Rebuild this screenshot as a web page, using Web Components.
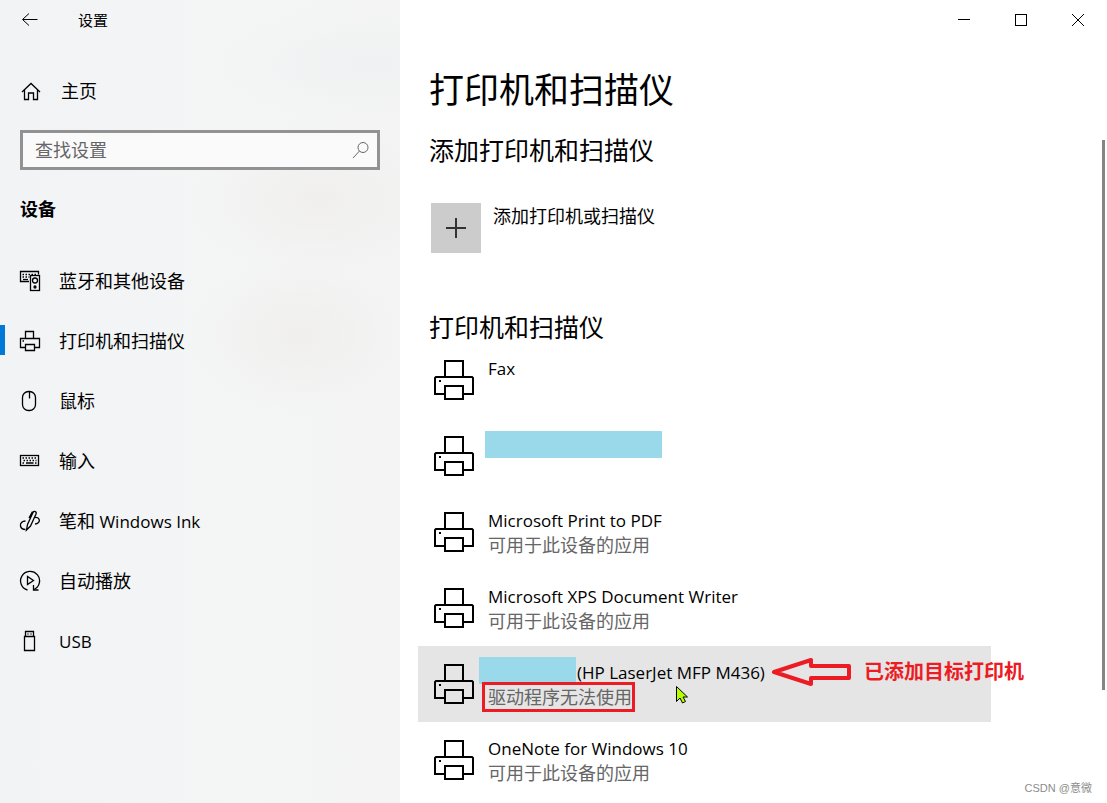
<!DOCTYPE html>
<html lang="zh-CN">
<head>
<meta charset="UTF-8">
<meta name="viewport" content="width=device-width, initial-scale=1">
<title>设置</title>
<style>
    html, body {
        margin: 0;
        height: 100%;
    }
    body {
        font-family: "Open Sans", "Noto Sans CJK SC", sans-serif;
        font-size: 17px;
        line-height: 24px;
        color: #000;
        background: #fff;
        overflow: hidden;
    }
    nav-item [lang="en"] {
        font-size: 17px;
    }
</style>
</head>
<body>
<settings-window>
    <settings-sidebar slot="sidebar">
        <nav-item icon="devices">蓝牙和其他设备</nav-item>
        <nav-item icon="printer" active>打印机和扫描仪</nav-item>
        <nav-item icon="mouse">鼠标</nav-item>
        <nav-item icon="keyboard">输入</nav-item>
        <nav-item icon="pen">笔和<span lang="en"> Windows Ink</span></nav-item>
        <nav-item icon="autoplay">自动播放</nav-item>
        <nav-item icon="usb"><span lang="en">USB</span></nav-item>
    </settings-sidebar>
    <window-controls slot="controls"></window-controls>
    <printer-page>
        <printer-item>Fax</printer-item>
        <printer-item><masked-text wide></masked-text></printer-item>
        <printer-item status="可用于此设备的应用">Microsoft Print to PDF</printer-item>
        <printer-item status="可用于此设备的应用">Microsoft XPS Document Writer</printer-item>
        <printer-item status="驱动程序无法使用" selected>
            <masked-text></masked-text>(HP LaserJet MFP M436)
            <callout-note slot="note">已添加目标打印机</callout-note>
        </printer-item>
        <printer-item status="可用于此设备的应用">OneNote for Windows 10</printer-item>
    </printer-page>
    <span slot="watermark">CSDN @意微</span>
</settings-window>

<script>
const ICONS = {
    back: '<path d="M22.500 11.500H8M14 5.500l-6.500 6 6.500 6" stroke-width="1"/>',
    home: '<path d="M4 13l9-8.500 9 8.500M6.500 11v9.500h4v-6.500h5v6.500h4V11"/>',
    search: '<circle cx="15" cy="9.500" r="5" stroke-width="1"/><path d="M11.500 13L5 20" stroke-width="1"/>',
    devices: '<path d="M12 13.500H3.500v-10h18v3"/><path d="M5.500 6.500h14M5.500 9h7" stroke-dasharray="1.500 1.500"/><path d="M6 11.500h5"/><rect x="13.500" y="7.500" width="9" height="15"/><circle cx="18" cy="12.500" r="2.500"/><circle cx="18" cy="19" r="1" fill="currentColor"/>',
    printer: '<path d="M8.500 10.500v-7h8v7M8.500 19.500h-5v-9h19v9h-5M8.500 16.500h9v6h-9z"/><path d="M5.500 13h1.500"/>',
    mouse: '<rect x="5.500" y="3.500" width="13" height="19" rx="6"/><path d="M12.500 3.500v7"/>',
    keyboard: '<rect x="3.500" y="7.500" width="18" height="10"/><path d="M5.500 10h14M6.500 12.500h13" stroke-dasharray="1.500 1.500"/><path d="M5.500 15h1.500M9 15h7.500M18 15h1.500"/>',
    pen: '<path d="M8.500 13C5 13 3 15.500 3.500 18s2.500 3.500 5 3.500M18 9.500c4-.5 5.500 3 3.500 5-1 1-2.500 1.500-3.500 1.500"/><path d="M9.500 22l1-5.500L16 4.500c1-2 4-1 3 1.500L13.500 18zM12 10l3.500-6.500"/>',
    autoplay: '<path d="M10.500 22A9.500 9.500 0 1 1 17 21.500"/><path d="M10.500 8.500v8l6-4zM16.500 17v5h5"/>',
    usb: '<path d="M8.500 8V3.500h8V8M7.500 8.500h10v14h-10z"/><path d="M10.500 6h1M13.500 6h1"/>',
    minimize: '<path d="M6 11.500h12"/>',
    maximize: '<rect x="6.500" y="6.500" width="11" height="11"/>',
    close: '<path d="M6 6l12 12M18 6L6 18"/>'
};

const icon = (name, size = 25) => `
    <svg width="${size}" height="${size}" viewBox="0 0 ${size} ${size}" fill="none" stroke="currentColor" stroke-width="1.3" aria-hidden="true">${ICONS[name]}</svg>
`;

class SettingsWindow extends HTMLElement {
    constructor() {
        super();
        this.attachShadow({ mode: 'open' });
    }

    connectedCallback() {
        this.shadowRoot.innerHTML = `
            <style>
                :host {
                    display: grid;
                    grid-template-columns: 400px minmax(0, 1fr);
                    height: 100vh;
                    position: relative;
                }
                main {
                    display: flex;
                    flex-direction: column;
                    min-height: 0;
                }
                .watermark {
                    position: absolute;
                    right: 15px;
                    bottom: 6px;
                    font-family: "Liberation Sans", "Noto Sans CJK SC", sans-serif;
                    font-size: 11px;
                    line-height: 18px;
                    color: #8c8c8c;
                }
            </style>
            <slot name="sidebar"></slot>
            <main>
                <slot name="controls"></slot>
                <slot></slot>
            </main>
            <div class="watermark"><slot name="watermark"></slot></div>
        `;
    }
}

class SettingsSidebar extends HTMLElement {
    constructor() {
        super();
        this.attachShadow({ mode: 'open' });
    }

    connectedCallback() {
        this.shadowRoot.innerHTML = `
            <style>
                :host {
                    display: block;
                    background:
                        radial-gradient(ellipse 110px 80px at 300px 335px, #f0efee, transparent),
                        radial-gradient(ellipse 130px 80px at 320px 200px, #f0efee, transparent),
                        radial-gradient(ellipse 160px 60px at 370px 65px, #f0f1f2, transparent),
                        linear-gradient(90deg, #f2f3f5, #f4f5f5 60%, #f4f4f4);
                }
                svg {
                    display: block;
                    flex: none;
                }
                button {
                    display: block;
                    border: 0;
                    padding: 0;
                    background: none;
                    color: inherit;
                }
                .title {
                    display: flex;
                    align-items: center;
                    gap: 45px;
                    height: 40px;
                    padding-left: 15px;
                    font-size: 15px;
                }
                .title button {
                    width: 18px;
                }
                .home {
                    display: flex;
                    align-items: center;
                    gap: 18px;
                    height: 60px;
                    margin: 21px 0 9px;
                    padding-left: 18px;
                    font-size: 18px;
                    color: inherit;
                    text-decoration: none;
                }
                .search {
                    display: flex;
                    align-items: center;
                    box-sizing: border-box;
                    height: 40px;
                    margin: 0 20px;
                    padding: 0 4px 0 12px;
                    border: 3px solid #929292;
                    background: #fafafa;
                    color: #666;
                }
                input {
                    flex: 1;
                    min-width: 0;
                    border: 0;
                    padding: 0;
                    outline: 0;
                    background: none;
                    font: inherit;
                    font-size: 18px;
                    color: #000;
                }
                input::placeholder {
                    color: #666;
                    opacity: 1;
                }
                h2 {
                    margin: 27px 20px 30px;
                    font-size: 18px;
                    line-height: 24px;
                    font-weight: 700;
                }
            </style>
            <div class="title">
                <button type="button" aria-label="返回">${icon('back')}</button>
                <span>设置</span>
            </div>
            <a class="home" href="#home">${icon('home')}主页</a>
            <div class="search">
                <input type="text" placeholder="查找设置" aria-label="查找设置">
                <button type="button" aria-label="搜索">${icon('search')}</button>
            </div>
            <h2>设备</h2>
            <nav><slot></slot></nav>
        `;
    }
}

class NavItem extends HTMLElement {
    constructor() {
        super();
        this.attachShadow({ mode: 'open' });
    }

    connectedCallback() {
        this.shadowRoot.innerHTML = `
            <style>
                :host {
                    display: block;
                }
                a {
                    display: flex;
                    align-items: center;
                    height: 60px;
                    color: inherit;
                    font-size: 18px;
                    text-decoration: none;
                }
                a::before {
                    content: "";
                    width: 5px;
                    height: 30px;
                    margin: 0 12px 2px 0;
                }
                :host([active]) a::before {
                    background: #0078d7;
                }
                svg {
                    margin: 0 17px 2px 0;
                }
            </style>
            <a href="#${this.getAttribute('icon')}">${icon(this.getAttribute('icon'))}<span><slot></slot></span></a>
        `;
    }
}

class WindowControls extends HTMLElement {
    constructor() {
        super();
        this.attachShadow({ mode: 'open' });
    }

    connectedCallback() {
        this.shadowRoot.innerHTML = `
            <style>
                :host {
                    display: flex;
                    justify-content: flex-end;
                    padding-right: 1px;
                }
                button {
                    display: grid;
                    place-items: center;
                    width: 57px;
                    height: 40px;
                    border: 0;
                    padding: 0;
                    background: none;
                    color: #000;
                }
                svg {
                    stroke-width: 1;
                }
            </style>
            <button type="button" aria-label="最小化">${icon('minimize', 24)}</button>
            <button type="button" aria-label="最大化">${icon('maximize', 24)}</button>
            <button type="button" aria-label="关闭">${icon('close', 24)}</button>
        `;
    }
}

class PrinterPage extends HTMLElement {
    constructor() {
        super();
        this.attachShadow({ mode: 'open' });
    }

    connectedCallback() {
        this.shadowRoot.innerHTML = `
            <style>
                :host {
                    display: flex;
                    flex: 1;
                    flex-direction: column;
                    min-height: 0;
                }
                h1, h2 {
                    margin: 0;
                    font-weight: 400;
                }
                h1 {
                    padding: 25px 29px;
                    font-size: 35px;
                    line-height: 50px;
                }
                .body {
                    display: flex;
                    flex: 1;
                    min-height: 0;
                }
                .scroll {
                    flex: 1;
                    min-width: 0;
                }
                h2 {
                    padding: 0 29px;
                    font-size: 25px;
                    line-height: 36px;
                }
                .scroll h2:first-child {
                    margin-top: -8px;
                }
                .add {
                    display: flex;
                    gap: 12px;
                    margin: 35px 31px 56px;
                    border: 0;
                    padding: 0;
                    background: none;
                    color: inherit;
                    font: inherit;
                    font-size: 18px;
                    line-height: 26px;
                }
                .plus {
                    display: grid;
                    place-items: center;
                    width: 50px;
                    height: 50px;
                    background: #ccc;
                }
                .list {
                    max-width: 573px;
                    margin: -3px 18px 0;
                }
                .bar {
                    width: 3px;
                    height: 83%;
                    margin-right: 2px;
                    background: #858585;
                }
            </style>
            <h1>打印机和扫描仪</h1>
            <div class="body">
                <div class="scroll">
                    <h2>添加打印机和扫描仪</h2>
                    <button class="add" type="button">
                        <span class="plus"><svg width="20" height="20" stroke="#333" stroke-width="2"><path d="M0 10h20M10 0v20"/></svg></span>
                        添加打印机或扫描仪
                    </button>
                    <h2>打印机和扫描仪</h2>
                    <div class="list"><slot></slot></div>
                </div>
                <div class="bar"></div>
            </div>
        `;
    }
}

class PrinterItem extends HTMLElement {
    constructor() {
        super();
        this.attachShadow({ mode: 'open' });
    }

    connectedCallback() {
        const status = this.getAttribute('status') || '';

        this.shadowRoot.innerHTML = `
            <style>
                :host {
                    display: flex;
                    gap: 14px;
                    position: relative;
                    box-sizing: border-box;
                    height: 76px;
                    padding: 15px 16px;
                }
                :host([selected]) {
                    background: #e5e5e5;
                }
                svg {
                    display: block;
                    flex: none;
                    margin-top: 3px;
                }
                .name {
                    white-space: nowrap;
                }
                .status {
                    font-size: 18px;
                    color: #666;
                }
                /* driver problem is framed in red */
                :host([selected]) .status span {
                    display: inline-block;
                    margin-left: -3px;
                    padding-left: 3px;
                    outline: 3px solid #ed1c24;
                }
                .pointer {
                    position: absolute;
                    left: 257px;
                    top: 39px;
                    margin: 0;
                }
                :host(:not([selected])) .pointer {
                    display: none;
                }
            </style>
            <svg width="40" height="40" fill="none" stroke="#000" stroke-width="2" aria-hidden="true">
                <path d="M11 16V1h18v15M11 34H1V18l1-1h36l1 1v16H29M11 26h18v13H11z"/>
                <path d="M5 21h2"/>
            </svg>
            <div>
                <div class="name"><slot></slot></div>
                <div class="status"><span>${status}</span></div>
            </div>
            <slot name="note"></slot>
            <svg class="pointer" width="14" height="20" fill="#b6ff00" stroke="#000" aria-hidden="true">
                <path d="M1.500 1.500v15l3.500-3.500 2.500 5 3-1.500-2.500-4.500h4.500z"/>
            </svg>
        `;
    }
}

class MaskedText extends HTMLElement {
    constructor() {
        super();
        this.attachShadow({ mode: 'open' });
    }

    connectedCallback() {
        this.shadowRoot.innerHTML = `
            <style>
                :host {
                    display: inline-block;
                    box-sizing: border-box;
                    width: 97px;
                    height: 27px;
                    margin: -4px 1px -3px -9px;
                    vertical-align: top;
                    background: #99d9ea;
                }
                :host([wide]) {
                    width: 177px;
                    margin: -2px 0 -3px -3px;
                }
            </style>
        `;
    }
}

class CalloutNote extends HTMLElement {
    constructor() {
        super();
        this.attachShadow({ mode: 'open' });
    }

    connectedCallback() {
        this.shadowRoot.innerHTML = `
            <style>
                :host {
                    display: flex;
                    align-items: center;
                    gap: 13px;
                    position: absolute;
                    left: 354px;
                    top: 11px;
                    font-size: 20px;
                    line-height: 30px;
                    font-weight: 700;
                    color: #ed1c24;
                    white-space: nowrap;
                }
            </style>
            <svg width="79" height="30" fill="none" stroke="currentColor" stroke-width="4" stroke-linejoin="round" aria-hidden="true">
                <path d="M2 15L39 3v6h38v12H39v6z"/>
            </svg>
            <slot></slot>
        `;
    }
}

customElements.define('settings-window', SettingsWindow);
customElements.define('settings-sidebar', SettingsSidebar);
customElements.define('nav-item', NavItem);
customElements.define('window-controls', WindowControls);
customElements.define('printer-page', PrinterPage);
customElements.define('printer-item', PrinterItem);
customElements.define('masked-text', MaskedText);
customElements.define('callout-note', CalloutNote);
</script>
</body>
</html>
